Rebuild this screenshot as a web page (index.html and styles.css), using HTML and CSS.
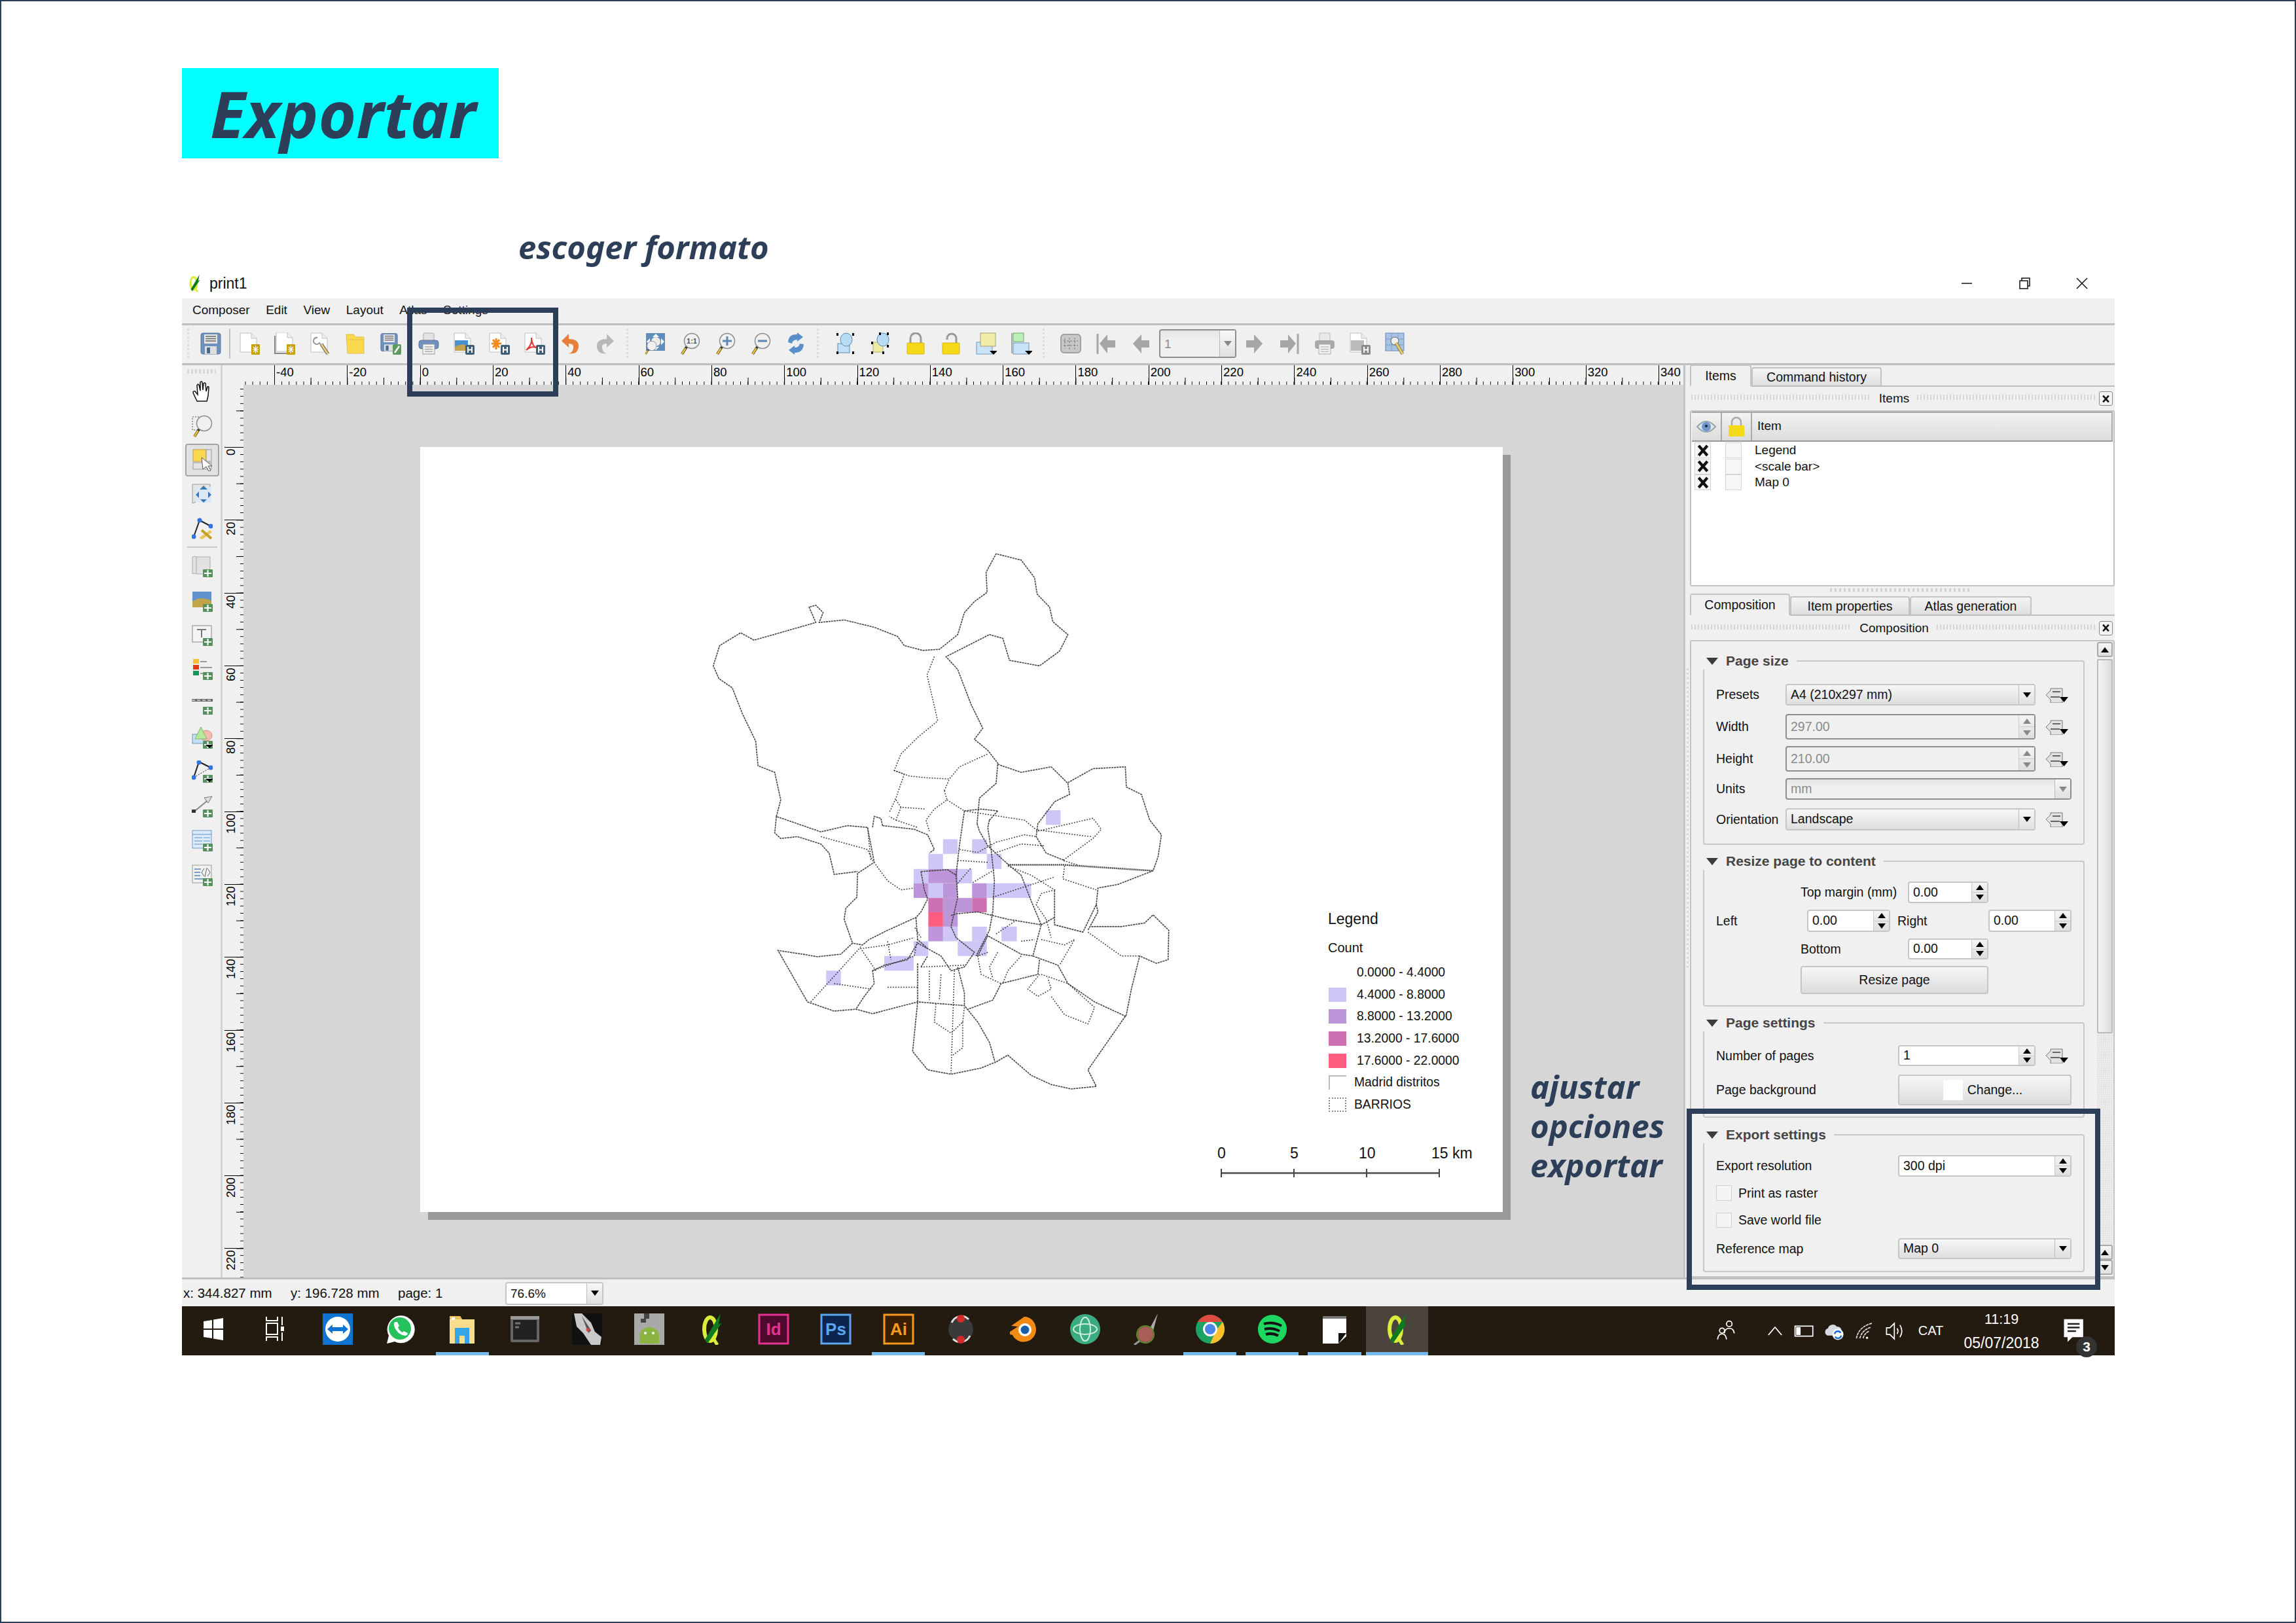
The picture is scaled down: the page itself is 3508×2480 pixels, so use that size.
FILE: index.html
```html
<!DOCTYPE html>
<html lang="es">
<head>
<meta charset="utf-8">
<title>Exportar</title>
<link rel="stylesheet" href="styles.css">
</head>
<body>
<svg class="defs" xmlns="http://www.w3.org/2000/svg">
<symbol id="pg" viewBox="0 0 32 34"><path d="M2 1h17l8 8v21H2z" fill="#fff" stroke="#bdbdbd"/><path d="M19 1v8h8" fill="#eee" stroke="#bdbdbd"/></symbol>
<symbol id="bdg" viewBox="0 0 32 34"><rect x="18" y="19" width="14" height="15" rx="2" fill="#3f5f78"/><path d="M22 22v9M28 22v9M22 26.500h6" stroke="#fff" stroke-width="2"/></symbol>
<symbol id="gold" viewBox="0 0 32 34"><rect x="19" y="18" width="13" height="16" rx="1" fill="#c7a00a"/><path d="M25.500 20v12M21 26h9M22 22l7 8M29 22l-7 8" stroke="#fff" stroke-width="1.200"/></symbol>
<symbol id="mag" viewBox="0 0 32 34"><circle cx="19" cy="13" r="11.500" fill="#f0f0f0" stroke="#8c8c8c" stroke-width="1.500"/><path d="M11 22L4 33" stroke="#333" stroke-width="4"/><path d="M9.500 24L4 33" stroke="#edc531" stroke-width="2.500"/></symbol>
<symbol id="plus" viewBox="0 0 32 34"><rect x="17" y="22" width="15" height="12" rx="1" fill="#56905f"/><path d="M24.500 23v10M19 28h11" stroke="#fff" stroke-width="2.200"/></symbol>
<symbol id="i-save" viewBox="0 0 32 34"><rect x="1" y="1" width="30" height="32" rx="3" fill="#6f91bd" stroke="#5a7699"/><rect x="6" y="3" width="20" height="14" fill="#e6e6e6"/><path d="M8 6h16M8 9.500h16M8 13h16" stroke="#666" stroke-width="1.500"/><rect x="7" y="21" width="18" height="12" fill="#dedede"/><rect x="10" y="23" width="5" height="9" fill="#4a6a90"/></symbol>
<symbol id="i-new" viewBox="0 0 32 34"><use href="#pg"/><use href="#gold"/></symbol>
<symbol id="i-dup" viewBox="0 0 32 34"><path d="M1 5v27h22" fill="none" stroke="#888" stroke-width="2"/><use href="#pg" x="1" y="-1"/><use href="#gold"/></symbol>
<symbol id="i-mgr" viewBox="0 0 32 34"><use href="#pg"/><path d="M12 8a5 5 0 1 0 3 8l5 6" fill="none" stroke="#999" stroke-width="2"/><path d="M18 18l10 15" stroke="#666" stroke-width="5"/><path d="M18 18l10 15" stroke="#e6cd7a" stroke-width="3"/></symbol>
<symbol id="i-open" viewBox="0 0 32 34"><path d="M2 3h11l3 4h13v25H4z" fill="#fbd94e" stroke="#e0bf4b"/><path d="M5 11h24" stroke="#e0bf4b"/></symbol>
<symbol id="i-saveas" viewBox="0 0 32 34"><use href="#i-save" width="27" height="30"/><rect x="19" y="18" width="13" height="16" rx="2" fill="#5f9a62"/><path d="M22 31l7-10" stroke="#fff" stroke-width="2.500"/></symbol>
<symbol id="i-print" viewBox="0 0 32 34"><rect x="8" y="1" width="16" height="14" rx="1" fill="#e3e3e3" stroke="#aaa"/><rect x="1" y="12" width="30" height="13" rx="4" fill="#6f91bd" stroke="#5a7699"/><rect x="7" y="18" width="18" height="15" fill="#f2f2f2" stroke="#999"/><path d="M10 22h12M10 25.500h12M10 29h12" stroke="#888"/></symbol>
<symbol id="i-eimg" viewBox="0 0 32 34"><use href="#pg" x="-1"/><rect x="2" y="12" width="20" height="16" fill="#4c90d4"/><path d="M2 22q9-6 20-2v8H2z" fill="#c2a54b"/><use href="#bdg"/></symbol>
<symbol id="i-esvg" viewBox="0 0 32 34"><use href="#pg" x="-1"/><path d="M11 9v17M4 17h15M6 11l10 12M16 11L6 23" stroke="#f08c1c" stroke-width="3"/><use href="#bdg"/></symbol>
<symbol id="i-epdf" viewBox="0 0 32 34"><use href="#pg" x="-1"/><path d="M11 8q2 10-8 19q9-8 18-3q-9-1-10-16" fill="none" stroke="#e53935" stroke-width="2.200"/><use href="#bdg"/></symbol>
<symbol id="i-undo" viewBox="0 0 32 34"><path d="M14 2L3 13l11 10v-6q8 0 7 7t-7 8q14 2 15-10t-15-12z" fill="#e67f3a"/></symbol>
<symbol id="i-redo" viewBox="0 0 32 34"><path d="M18 2l11 11-11 10v-6q-8 0-7 7t7 8q-14 2-15-10t15-12z" fill="#b8b8b8"/></symbol>
<symbol id="i-full" viewBox="0 0 32 34"><rect x="3" y="1" width="29" height="27" fill="#5f8dbe"/><path d="M18 2l5 5h-10zM18 27l5-5h-10zM4 14l5-5v10zM31 14l-5-5v10z" fill="#fff"/><circle cx="18" cy="14" r="7" fill="#eee"/><use href="#mag" width="20" height="22" y="12"/></symbol>
<symbol id="i-zin" viewBox="0 0 32 34"><use href="#mag"/><path d="M19 6v14M12 13h14" stroke="#5b87b8" stroke-width="3"/></symbol>
<symbol id="i-zout" viewBox="0 0 32 34"><use href="#mag"/><path d="M12 13h14" stroke="#5b87b8" stroke-width="3"/></symbol>
<symbol id="i-ref" viewBox="0 0 32 34"><path d="M4 15Q5 2 18 3V0l9 7-9 7v-3q-7 0-8 6zM28 18q-1 13-14 13v3l-9-7 9-7v3q7 0 8-6z" fill="#5a90c9"/></symbol>
<symbol id="i-grp" viewBox="0 0 32 34"><rect x="5" y="17" width="18" height="14" fill="#bfe0f5" stroke="#5c8ab0"/><ellipse cx="18" cy="11" rx="9" ry="10" fill="#b7dcf4" stroke="#5c8ab0"/><path d="M3 1h3v4H3zM27 1h3v4h-3zM3 29h3v4H3zM27 29h3v4h-3z"/></symbol>
<symbol id="i-ugrp" viewBox="0 0 32 34"><rect x="5" y="15" width="15" height="15" fill="#eeeaa6" stroke="#b5b070"/><ellipse cx="20" cy="11" rx="9" ry="10" fill="#b7dcf4" stroke="#5c8ab0"/><path d="M14 0h3v4h-3zM26 0h3v4h-3zM2 14h3v4H2zM26 19h3v4h-3zM2 29h3v4H2zM19 29h3v4h-3z"/></symbol>
<symbol id="i-lock" viewBox="0 0 32 34"><path d="M8 17V9a8 8 0 0 1 16 0v8" fill="none" stroke="#999" stroke-width="3"/><rect x="3" y="16" width="26" height="17" rx="1" fill="#f4d919" stroke="#d6b70c"/></symbol>
<symbol id="i-unlock" viewBox="0 0 32 34"><path d="M24 17V9a7 7 0 0 0-14 0v2" fill="none" stroke="#999" stroke-width="3"/><rect x="3" y="16" width="26" height="17" rx="1" fill="#f4d919" stroke="#d6b70c"/></symbol>
<symbol id="i-raise" viewBox="0 0 32 34"><rect x="1" y="15" width="24" height="18" fill="#c8e2f7" stroke="#6c96b8"/><rect x="7" y="1" width="23" height="20" fill="#f2eeaa" stroke="#a39f72"/><path d="M21 28h12l-6 6z"/></symbol>
<symbol id="i-align" viewBox="0 0 32 34"><path d="M1 1v31" stroke="#666"/><rect x="3" y="1" width="16" height="13" fill="#bdf0b8" stroke="#6aa76a"/><rect x="3" y="16" width="24" height="17" fill="#c8e2f7" stroke="#6c96b8"/><path d="M21 28h12l-6 6z"/></symbol>
<symbol id="i-atlas" viewBox="0 0 32 34"><rect x="1" y="3" width="30" height="28" rx="5" fill="#c8c8c8" stroke="#a0a0a0" stroke-width="2"/><path d="M7 9v16M14 8v18M22 8v18M5 13h22M5 20h22" stroke="#777" stroke-dasharray="3 2"/></symbol>
<symbol id="i-first" viewBox="0 0 32 34"><path d="M3 2v31" stroke="#a6a6a6" stroke-width="3"/><path d="M6 17L18 3v9h12v11H18v9z" fill="#a6a6a6"/></symbol>
<symbol id="i-prev" viewBox="0 0 32 34"><path d="M3 17L16 3v9h12v11H16v9z" fill="#a6a6a6"/></symbol>
<symbol id="i-next" viewBox="0 0 32 34"><path d="M29 17L16 3v9H4v11h12v9z" fill="#a6a6a6"/></symbol>
<symbol id="i-last" viewBox="0 0 32 34"><path d="M29 2v31" stroke="#a6a6a6" stroke-width="3"/><path d="M26 17L14 3v9H2v11h12v9z" fill="#a6a6a6"/></symbol>
<symbol id="i-gprint" viewBox="0 0 32 34"><rect x="8" y="1" width="16" height="14" rx="1" fill="#e8e8e8" stroke="#bbb"/><rect x="1" y="12" width="30" height="13" rx="4" fill="#a8a8a8"/><rect x="7" y="18" width="18" height="15" fill="#f2f2f2" stroke="#aaa"/><path d="M10 22h12M10 25.500h12M10 29h12" stroke="#aaa"/></symbol>
<symbol id="i-gexp" viewBox="0 0 32 34"><use href="#pg" x="-1"/><rect x="2" y="12" width="20" height="16" fill="#bbb"/><rect x="18" y="19" width="14" height="15" rx="2" fill="#8a8a8a"/><path d="M22 22v9M28 22v9M22 26.500h6" stroke="#fff" stroke-width="2"/></symbol>
<symbol id="i-aset" viewBox="0 0 32 34"><rect x="1" y="1" width="28" height="27" fill="#a9c3e2" stroke="#6488b6"/><path d="M10 2v25M20 2v25M2 10h26M2 19h26" stroke="#7b9bc4"/><circle cx="15" cy="13" r="6" fill="#eee" stroke="#666"/><path d="M17 16l10 17" stroke="#8b7b3c" stroke-width="5"/><path d="M17 16l10 17" stroke="#e8cf72" stroke-width="3"/></symbol>
<symbol id="l-hand" viewBox="0 0 32 34"><path d="M8 32L2 19q0-3 3-2l4 5-1-14q1-3 3-1l2 9 0-13q2-2 3 0l1 12 1-10q2-2 3 0l1 12 2-7q2-1 2 1l-1 13-2 8z" fill="#fff" stroke="#111" stroke-width="1.500"/></symbol>
<symbol id="l-zoom" viewBox="0 0 32 34"><rect x="1" y="3" width="16" height="20" fill="none" stroke="#555" stroke-dasharray="2 2"/><use href="#mag"/></symbol>
<symbol id="l-sel" viewBox="0 0 32 34"><rect x="2" y="1" width="20" height="18" fill="#fbd94e" stroke="#b9a14a"/><rect x="22" y="1" width="8" height="18" fill="#e4e4e4" stroke="#999"/><rect x="2" y="21" width="28" height="10" fill="#e4e4e4" stroke="#999"/><path d="M15 13l16 13-6 0 4 7-3 1-4-7-5 4z" fill="#fff" stroke="#555"/></symbol>
<symbol id="l-move" viewBox="0 0 32 34"><path d="M1 2h27v27H6l-5 2z" fill="#e4e4e4" stroke="#999"/><rect x="6" y="6" width="24" height="24" fill="#dce8f5"/><path d="M18 4l6 6H12zM18 30l-5-5h10zM6 18l5-5v10zM30 18l-5-5v10z" fill="#3f79b3"/></symbol>
<symbol id="l-node" viewBox="0 0 32 34"><path d="M3 29L12 4l17 9" fill="none" stroke="#222" stroke-width="2"/><circle cx="12" cy="4" r="3.500" fill="#2f73e0"/><circle cx="29" cy="13" r="3.500" fill="#2f73e0"/><circle cx="3" cy="29" r="3.500" fill="#2f73e0"/><path d="M11 31l17-12 3 3-15 11z" fill="#eac451"/><path d="M15 19l15 13" stroke="#c59f2d" stroke-width="4"/></symbol>
<symbol id="l-map" viewBox="0 0 32 34"><path d="M1 3q3-2 6 0h21v26H7q-3-2-6 0z" fill="#e2e2e2" stroke="#aaa"/><path d="M7 3v26" stroke="#aaa"/><use href="#plus"/></symbol>
<symbol id="l-pic" viewBox="0 0 32 34"><rect x="1" y="3" width="29" height="24" fill="#5f93cd"/><path d="M1 18q13-9 29-1v10H1z" fill="#c2a54b"/><use href="#plus"/></symbol>
<symbol id="l-lbl" viewBox="0 0 32 34"><rect x="1" y="3" width="29" height="25" fill="#f4f4f4" stroke="#888"/><path d="M8 9h14M15 9v12" stroke="#777" stroke-width="2"/><use href="#plus"/></symbol>
<symbol id="l-leg" viewBox="0 0 32 34"><rect x="2" y="2" width="9" height="7" fill="#fbc02d"/><rect x="2" y="11" width="9" height="7" fill="#e63a12"/><rect x="2" y="20" width="9" height="7" fill="#14955a"/><path d="M13 6h10M13 15h18M13 24h7" stroke="#999" stroke-width="2"/><use href="#plus"/></symbol>
<symbol id="l-scale" viewBox="0 0 32 34"><path d="M0 12h32" stroke="#666" stroke-width="4"/><path d="M0 12h32" stroke="#ddd" stroke-width="1.500" stroke-dasharray="5 3"/><use href="#plus"/></symbol>
<symbol id="l-shape" viewBox="0 0 32 34"><rect x="1" y="12" width="24" height="14" fill="#c5e0f5" stroke="#6c96b8"/><ellipse cx="22" cy="14" rx="9" ry="8" fill="#f6b9b0" stroke="#c98"/><path d="M14 1l9 18H5z" fill="#b7eb9a" stroke="#7db368"/><use href="#plus"/><path d="M21 28h12l-6 5z"/></symbol>
<symbol id="l-poly" viewBox="0 0 32 34"><path d="M3 26L11 2l18 9" fill="none" stroke="#222" stroke-width="2"/><path d="M3 26l26-15" stroke="#222" stroke-dasharray="2 2"/><circle cx="11" cy="3" r="3.500" fill="#2f73e0"/><circle cx="29" cy="11" r="3.500" fill="#2f73e0"/><circle cx="3" cy="26" r="3.500" fill="#2f73e0"/><use href="#plus"/><path d="M21 28h12l-6 5z"/></symbol>
<symbol id="l-arrow" viewBox="0 0 32 34"><path d="M5 24L28 5" stroke="#888" stroke-width="2"/><path d="M31 2l-12 2 6 8z" fill="#ddd" stroke="#777"/><rect x="0" y="22" width="6" height="5" fill="#333"/><use href="#plus"/></symbol>
<symbol id="l-table" viewBox="0 0 32 34"><rect x="1" y="2" width="29" height="27" fill="#dcecfa" stroke="#6f9bc6"/><path d="M1 8h29M4 13h12M18 13h10M4 18h12M18 18h10M4 23h12M18 23h10" stroke="#5f8fc1"/><use href="#plus"/></symbol>
<symbol id="l-html" viewBox="0 0 32 34"><rect x="1" y="2" width="29" height="27" fill="#f1f1f1" stroke="#999"/><path d="M4 8h10M4 13h9M4 18h9M4 23h14" stroke="#7aa0ca" stroke-width="2"/><path d="M19 7l-4 6 4 6M24 7l4 6-4 6M23 6l-3 14" stroke="#666" fill="none"/><use href="#plus"/></symbol>
<symbol id="dd" viewBox="0 0 34 24"><path d="M0 12l7-7V2h18v22H7v-5z" fill="#e2e2e2" stroke="#777"/><path d="M10 7h12M7 15h14" stroke="#666" stroke-width="2"/><path d="M21 15h13l-6.500 8z" fill="#000"/></symbol>
<symbol id="q" viewBox="0 0 48 48"><ellipse cx="22" cy="24" rx="9" ry="18" fill="none" stroke="#dcec3a" stroke-width="6"/><path d="M25 35l8 13" stroke="#dcec3a" stroke-width="5"/><path d="M14 40L38 0l-3 17 5-3-22 32z" fill="#0f7a1f"/></symbol>
<symbol id="t-win" viewBox="0 0 48 48"><path d="M9 12l13-2v13H9zM24 9.600L39 7v16H24zM9 25h13v13l-13-2zM24 25h15v16l-15-2.500z" fill="#fff"/></symbol>
<symbol id="t-view" viewBox="0 0 48 48"><path d="M10 5v6h17V5M10 42v-6h17v6M34 5v13M34 29v13" fill="none" stroke="#fff" stroke-width="2"/><rect x="10" y="15" width="17" height="17" fill="none" stroke="#fff" stroke-width="2"/><rect x="32" y="20" width="5" height="7" fill="#fff"/></symbol>
<symbol id="t-tv" viewBox="0 0 48 48"><rect x="1" y="0" width="46" height="48" fill="#0d74d2"/><circle cx="24" cy="24" r="19" fill="#fff"/><path d="M8 24l8-7v4h16v-4l8 7-8 7v-4H16v4z" fill="#0d74d2"/></symbol>
<symbol id="t-wa" viewBox="0 0 48 48"><path d="M4 46l3-12A21 21 0 1 1 16 43z" fill="#fff"/><circle cx="24" cy="23" r="17" fill="#25c15a"/><path d="M16 13q-3 4 2 12t14 9q4-1 4-4l-6-3-2 2q-5-2-7-8l2-2-3-6z" fill="#fff"/></symbol>
<symbol id="t-exp" viewBox="0 0 48 48"><path d="M5 4h16l3 5h19v37H5z" fill="#f9dc8d"/><path d="M5 4h16l3 5H5z" fill="#edc35e"/><rect x="13" y="22" width="22" height="24" fill="#35a5e6"/><rect x="20" y="34" width="8" height="12" fill="#f9dc8d"/><rect x="8" y="6" width="5" height="4" fill="#fff"/></symbol>
<symbol id="t-term" viewBox="0 0 48 48"><rect x="2" y="4" width="44" height="40" rx="2" fill="#666"/><rect x="6" y="10" width="36" height="30" fill="#222"/><rect x="2" y="4" width="44" height="5" fill="#999"/><path d="M9 15h8M9 21h6" stroke="#777" stroke-width="3"/></symbol>
<symbol id="t-anime" viewBox="0 0 48 48"><rect x="1" y="0" width="46" height="48" fill="#111"/><path d="M4 0h12l14 14 6 14 10 8-2 12H30L18 30 8 20z" fill="#c9c9c9"/><path d="M16 4l14 22-4 4z" fill="#555"/><circle cx="25" cy="25" r="2.500" fill="#d44"/></symbol>
<symbol id="t-andr" viewBox="0 0 48 48"><rect x="1" y="0" width="46" height="48" fill="#a9a9a9"/><path d="M16 0h8v8h-5v6h-8V8h5z" fill="#444"/><path d="M9 34a15 13 0 0 1 30 0v12H9z" fill="#8cb442"/><circle cx="18" cy="30" r="2" fill="#fff"/><circle cx="30" cy="30" r="2" fill="#fff"/></symbol>
<symbol id="t-rec" viewBox="0 0 48 48"><circle cx="24" cy="24" r="19" fill="#3a3a3a"/><path d="M10 14a16 16 0 0 1 26-5M38 34a16 16 0 0 1-26 5" fill="none" stroke="#ddd" stroke-width="3"/><circle cx="24" cy="8" r="6" fill="#d62a2a"/><circle cx="24" cy="40" r="6" fill="#d62a2a"/></symbol>
<symbol id="t-blend" viewBox="0 0 48 48"><path d="M4 28l12-8-10-1 20-14c10 0 18 8 18 20A19 19 0 0 1 8 33l-4-1z" fill="#f08a12"/><circle cx="27" cy="25" r="10" fill="#fff"/><circle cx="27" cy="25" r="6.500" fill="#1b5ea8"/></symbol>
<symbol id="t-atom" viewBox="0 0 48 48"><circle cx="24" cy="24" r="23" fill="#3bab81"/><ellipse cx="24" cy="24" rx="8" ry="18" fill="none" stroke="#cfeedd" stroke-width="2"/><ellipse cx="24" cy="24" rx="18" ry="8" fill="none" stroke="#cfeedd" stroke-width="2"/></symbol>
<symbol id="t-brush" viewBox="0 0 48 48"><path d="M40 0L26 26l6 4z" fill="#aaa"/><circle cx="21" cy="32" r="12" fill="#a85f58"/><circle cx="21" cy="32" r="13" fill="none" stroke="#5c8a2c" stroke-width="2"/><path d="M12 42l-8 6" stroke="#999" stroke-width="3"/></symbol>
<symbol id="t-chrome" viewBox="0 0 48 48"><circle cx="24" cy="24" r="22" fill="#1da462"/><path d="M5 13a22 22 0 0 1 38 0H24z" fill="#dd4c3e"/><path d="M43 13a22 22 0 0 1-19 33l9-20z" fill="#fbc02d"/><circle cx="24" cy="24" r="11" fill="#fff"/><circle cx="24" cy="24" r="8" fill="#4a86e8"/></symbol>
<symbol id="t-spot" viewBox="0 0 48 48"><circle cx="24" cy="24" r="22" fill="#1ed760"/><path d="M11 16q14-4 27 3M12 24q12-3 23 3M14 32q10-3 19 2" fill="none" stroke="#111" stroke-width="4"/></symbol>
<symbol id="t-sticky" viewBox="0 0 48 48"><rect x="6" y="4" width="36" height="4" fill="#777"/><path d="M6 8h36v27L30 46H6z" fill="#fff"/><path d="M42 30L30 46V30z" fill="#111"/></symbol>
<symbol id="u-people" viewBox="0 0 40 40"><circle cx="26" cy="7" r="5" fill="none" stroke="#fff" stroke-width="2"/><path d="M17 24q1-9 9-9t9 9" fill="none" stroke="#fff" stroke-width="2"/><circle cx="13" cy="19" r="4.500" fill="#231a10" stroke="#fff" stroke-width="2"/><path d="M5 35q1-10 8-10t8 10" fill="none" stroke="#fff" stroke-width="2"/></symbol>
<symbol id="u-chev" viewBox="0 0 40 40"><path d="M8 27l12-14 12 14" fill="none" stroke="#fff" stroke-width="2"/></symbol>
<symbol id="u-batt" viewBox="0 0 40 40"><rect x="3" y="11" width="32" height="18" fill="none" stroke="#fff" stroke-width="2"/><rect x="5" y="13" width="8" height="14" fill="#fff"/></symbol>
<symbol id="u-cloud" viewBox="0 0 40 40"><path d="M7 28a7 7 0 0 1 1-13a9 9 0 0 1 16-3a7 7 0 0 1 8 9v7z" fill="#d6dbe2"/><circle cx="26" cy="26" r="10" fill="#fff"/><path d="M20 25a6 6 0 0 1 11-2M32 28a6 6 0 0 1-11 2" fill="none" stroke="#1f6fd6" stroke-width="3"/></symbol>
<symbol id="u-wifi" viewBox="0 0 40 40"><path d="M4 33Q8 12 32 6M10 33Q14 18 30 13M16 33q2-9 11-13" fill="none" stroke="#dcdcdc" stroke-width="2" stroke-dasharray="5 1"/><circle cx="23" cy="32" r="2" fill="#fff"/></symbol>
<symbol id="u-spk" viewBox="0 0 40 40"><path d="M4 14h6l8-8v28l-8-8H4z" fill="none" stroke="#fff" stroke-width="2"/><path d="M23 15q3 5 0 10M28 9q7 11 0 22" fill="none" stroke="#fff" stroke-width="2"/></symbol>
<symbol id="u-notif" viewBox="0 0 48 48"><path d="M6 4h32v30H20l-8 8v-8H6z" fill="#fff"/><path d="M12 12h20M12 18h20M12 24h14" stroke="#222" stroke-width="2.500"/></symbol>
<symbol id="w-min" viewBox="0 0 24 24"><path d="M4 12h16" stroke="#111" stroke-width="1.500"/></symbol>
<symbol id="w-res" viewBox="0 0 24 24"><rect x="5" y="8" width="12" height="12" fill="none" stroke="#111" stroke-width="1.500"/><path d="M8 8V4h12v12h-3" fill="none" stroke="#111" stroke-width="1.500"/></symbol>
<symbol id="w-cls" viewBox="0 0 24 24"><path d="M4 4l16 16M20 4L4 20" stroke="#111" stroke-width="1.500"/></symbol>
<symbol id="x-chk" viewBox="0 0 24 24"><path d="M4 3l16 18M20 3L4 21" stroke="#111" stroke-width="5"/></symbol>
<symbol id="x-eye" viewBox="0 0 30 24"><path d="M1 12Q15-4 29 12Q15 28 1 12z" fill="#dfe6ee" stroke="#9aa4ad" stroke-width="2"/><circle cx="15" cy="12" r="7" fill="#6d97c7"/><circle cx="15" cy="11" r="2" fill="#223"/></symbol>
<symbol id="x-lock" viewBox="0 0 26 32"><path d="M6 16V9a7 7 0 0 1 14 0v7" fill="none" stroke="#aaa" stroke-width="2.500"/><rect x="1" y="14" width="24" height="17" rx="1" fill="#f4d919"/></symbol>
</svg>

<main class="slide">
  <h1 class="title">Exportar</h1>
  <p class="note note-top">escoger formato</p>

  <div class="win">
    <header class="titlebar">
      <svg class="qicon"><use href="#q"/></svg>
      <span class="wintitle">print1</span>
      <span class="winbtns">
        <svg class="wb"><use href="#w-min"/></svg>
        <svg class="wb"><use href="#w-res"/></svg>
        <svg class="wb"><use href="#w-cls"/></svg>
      </span>
    </header>

    <nav class="menubar">
      <span>Composer</span><span>Edit</span><span>View</span><span>Layout</span><span>Atlas</span><span>Settings</span>
    </nav>

    <div class="toolbar">
      <span class="handle"></span>
      <span class="tb"><svg class="ic"><use href="#i-save"/></svg></span>
      <span class="tsep"></span>
      <span class="tb"><svg class="ic"><use href="#i-new"/></svg></span>
      <span class="tb"><svg class="ic"><use href="#i-dup"/></svg></span>
      <span class="tb"><svg class="ic"><use href="#i-mgr"/></svg></span>
      <span class="tb"><svg class="ic"><use href="#i-open"/></svg></span>
      <span class="tb"><svg class="ic"><use href="#i-saveas"/></svg></span>
      <span class="tgap4"></span>
      <span class="tb"><svg class="ic"><use href="#i-print"/></svg></span>
      <span class="tb"><svg class="ic"><use href="#i-eimg"/></svg></span>
      <span class="tb"><svg class="ic"><use href="#i-esvg"/></svg></span>
      <span class="tb"><svg class="ic"><use href="#i-epdf"/></svg></span>
      <span class="tb"><svg class="ic"><use href="#i-undo"/></svg></span>
      <span class="tb"><svg class="ic"><use href="#i-redo"/></svg></span>
      <span class="handle handle-mid"></span>
      <span class="tb"><svg class="ic"><use href="#i-full"/></svg></span>
      <span class="tb"><svg class="ic" viewBox="0 0 32 34"><use href="#mag"/><text x="19" y="17" text-anchor="middle" class="svt">1:1</text></svg></span>
      <span class="tb"><svg class="ic"><use href="#i-zin"/></svg></span>
      <span class="tb"><svg class="ic"><use href="#i-zout"/></svg></span>
      <span class="tb"><svg class="ic"><use href="#i-ref"/></svg></span>
      <span class="handle handle-mid"></span>
      <span class="tb"><svg class="ic"><use href="#i-grp"/></svg></span>
      <span class="tb"><svg class="ic"><use href="#i-ugrp"/></svg></span>
      <span class="tb"><svg class="ic"><use href="#i-lock"/></svg></span>
      <span class="tb"><svg class="ic"><use href="#i-unlock"/></svg></span>
      <span class="tb"><svg class="ic"><use href="#i-raise"/></svg></span>
      <span class="tb"><svg class="ic"><use href="#i-align"/></svg></span>
      <span class="handle handle-mid"></span>
      <span class="tb"><svg class="ic"><use href="#i-atlas"/></svg></span>
      <span class="tb"><svg class="ic"><use href="#i-first"/></svg></span>
      <span class="tb"><svg class="ic"><use href="#i-prev"/></svg></span>
      <span class="fld dis combo pagebox"><span class="t">1</span><span class="arr"><i class="dn"></i></span></span>
      <span class="tb"><svg class="ic"><use href="#i-next"/></svg></span>
      <span class="tb"><svg class="ic"><use href="#i-last"/></svg></span>
      <span class="tb"><svg class="ic"><use href="#i-gprint"/></svg></span>
      <span class="tb"><svg class="ic"><use href="#i-gexp"/></svg></span>
      <span class="tb"><svg class="ic"><use href="#i-aset"/></svg></span>
    </div>

    <div class="work">
      <aside class="lefttools">
        <div class="lgrip"></div>
        <span class="lt"><svg class="ic"><use href="#l-hand"/></svg></span>
        <span class="lt"><svg class="ic"><use href="#l-zoom"/></svg></span>
        <span class="lt lt-on"><svg class="ic"><use href="#l-sel"/></svg></span>
        <span class="lt"><svg class="ic"><use href="#l-move"/></svg></span>
        <span class="lt"><svg class="ic"><use href="#l-node"/></svg></span>
        <span class="lsep"></span>
        <span class="lt"><svg class="ic"><use href="#l-map"/></svg></span>
        <span class="lt"><svg class="ic"><use href="#l-pic"/></svg></span>
        <span class="lt"><svg class="ic"><use href="#l-lbl"/></svg></span>
        <span class="lt"><svg class="ic"><use href="#l-leg"/></svg></span>
        <span class="lt"><svg class="ic"><use href="#l-scale"/></svg></span>
        <span class="lt"><svg class="ic"><use href="#l-shape"/></svg></span>
        <span class="lt"><svg class="ic"><use href="#l-poly"/></svg></span>
        <span class="lt"><svg class="ic"><use href="#l-arrow"/></svg></span>
        <span class="lt"><svg class="ic"><use href="#l-table"/></svg></span>
        <span class="lt"><svg class="ic"><use href="#l-html"/></svg></span>
      </aside>

      <section class="center">
        <div class="hruler">
          <span>-40</span><span>-20</span><span>0</span><span>20</span><span>40</span><span>60</span><span>80</span><span>100</span><span>120</span><span>140</span><span>160</span><span>180</span><span>200</span><span>220</span><span>240</span><span>260</span><span>280</span><span>300</span><span>320</span><span>340</span>
        </div>
        <div class="below">
          <div class="vruler">
            <span><b>0</b></span><span><b>20</b></span><span><b>40</b></span><span><b>60</b></span><span><b>80</b></span><span><b>100</b></span><span><b>120</b></span><span><b>140</b></span><span><b>160</b></span><span><b>180</b></span><span><b>200</b></span><span><b>220</b></span>
          </div>
          <div class="canvas">
            <div class="page">
              <svg class="map" viewBox="0 0 1568 1568" preserveAspectRatio="none">
                <g class="c1">
                  <rect x="1074" y="743" width="44" height="40"/><rect x="766" y="822" width="44" height="40"/><rect x="853" y="822" width="44" height="40"/><rect x="722" y="862" width="44" height="41"/><rect x="897" y="862" width="44" height="41"/><rect x="678" y="903" width="44" height="39"/><rect x="810" y="903" width="43" height="39"/><rect x="722" y="942" width="44" height="40"/><rect x="897" y="942" width="133" height="40"/><rect x="853" y="1060" width="44" height="40"/><rect x="941" y="1060" width="46" height="40"/><rect x="766" y="1060" width="44" height="40"/><rect x="678" y="1100" width="44" height="40"/><rect x="810" y="1100" width="87" height="40"/><rect x="590" y="1140" width="88" height="40"/><rect x="416" y="1180" width="44" height="40"/>
                </g>
                <g class="c2">
                  <rect x="722" y="903" width="88" height="39"/><rect x="678" y="942" width="44" height="40"/><rect x="766" y="942" width="44" height="40"/><rect x="853" y="942" width="44" height="40"/><rect x="766" y="982" width="87" height="39"/><rect x="766" y="1021" width="44" height="39"/><rect x="722" y="1060" width="44" height="40"/>
                </g>
                <g class="c3"><rect x="722" y="982" width="44" height="39"/><rect x="853" y="982" width="44" height="39"/></g>
                <g class="c4"><rect x="722" y="1021" width="44" height="39"/></g>
                <g class="barrio">
                  <path d="M740 325L718 375L735 440L750 500L690 545L640 590L620 635L665 650L720 655L785 658L815 625L900 590"/>
                  <path d="M620 635L650 645L625 710L605 750M770 690L785 658M770 690L778 715L740 740L715 770L725 800M778 715L830 745M625 715L640 735L715 740M640 735L625 770L605 760M625 770L690 790"/>
                  <path d="M830 745L1010 770L1050 800L1215 765L1240 795L1215 820L1125 880L1180 895M1050 797L1120 805L1210 815M925 830L1010 810L1045 815M920 860L1000 835L1070 840"/>
                  <path d="M960 895L1030 920L1100 960L1060 970L1045 1000L1075 1040M1130 895L1125 930L1225 960M400 815L540 850L555 880L600 935L640 960L680 955M540 790L550 880M815 850L870 858L925 830M810 880L900 885M810 942L850 900M855 940L920 905M915 980L1100 925M1000 1100L1040 1095M925 1080L990 1040"/>
                  <path d="M565 1180L520 1120L600 1110L680 1090M370 1265L520 1115M440 1215L550 1230M555 1180L680 1140L690 1095M600 1100L610 1150M700 1090L680 1060"/>
                  <path d="M700 1170L830 1165M725 1180L725 1260M760 1190L755 1260M800 1180L790 1460M745 1270L740 1320L790 1350L825 1320L830 1280M825 1320L825 1390L795 1410M600 1225L690 1225"/>
                  <path d="M900 1130L870 1140L880 1190L940 1215M930 1130L905 1170L915 1200M1000 1140L960 1180L945 1215M1055 1190L1020 1230L1050 1250L1090 1230L1080 1200M1060 1190L1140 1215L1220 1280L1200 1325L1130 1300L1090 1250M1060 1095L1130 1110L1160 1095L1115 1165M1200 1075L1300 1140L1355 1140M1075 1040L1090 1090"/>
                </g>
                <g class="distrito">
                  <path d="M267 760L280 715L262 640L212 622L205 555L165 480L135 410L95 385L78 350L97 295L160 260L200 280L270 262L385 232L365 190L385 185L407 205L395 232L470 225L560 245L630 270L650 295L705 308L755 305L810 265L830 205L860 175L898 150L895 95L925 45L1000 62L1040 110L1048 155L1085 190L1095 230L1140 265L1115 310L1055 350L965 335L945 275L905 265L840 295L775 325L810 360L850 455L885 520L860 550L900 580L930 615L925 670L875 710L868 780"/>
                  <path d="M930 618L1000 640L1090 625L1140 670L1145 700L1100 720L1050 780L1045 815L1075 860L1130 880M1140 668L1215 630L1312 625L1315 680L1360 700L1385 770L1420 810L1410 870L1395 908L1290 945L1230 955L1225 1000L1185 1075L1100 1055L1100 960M1225 1000L1230 1020L1200 1070M1210 1060L1300 1060L1370 1050L1395 1028L1442 1070L1440 1150L1405 1160L1355 1140L1330 1230L1315 1300L1200 1450L1225 1495L1150 1502L1090 1490L1030 1465L960 1410L922 1430L905 1375L870 1320L830 1275L690 1265L555 1297L505 1285L440 1290L360 1265L272 1125L345 1135L390 1142L460 1135L495 1105L470 1040L475 1010L508 980L510 915L560 885L540 790L480 785L400 802L267 760L262 805L280 820L330 815L400 835L425 860L440 918L510 910"/>
                  <path d="M585 785L580 765L560 760L555 790M585 785L680 795L720 810L740 850L725 860M700 910L780 905L805 920L810 980L800 1020L790 1060L805 1090L860 1130L830 1170L790 1180L760 1140L720 1120L690 1105L660 1150L590 1165L555 1180L560 1215L530 1250L505 1285M700 910L710 960L720 985L700 1020L685 1035L600 1070L545 1095L525 1110L495 1105M685 1035L690 1095L720 1120M805 1025L870 1020L960 1040L1060 1055L1100 1035M790 1030L805 1025"/>
                  <path d="M830 745L815 840L805 920M830 745L880 740L930 745M905 770L900 790L910 850L920 935L915 1020L905 1070L865 1140M905 770L930 745M868 780L875 800L900 840L960 890L1000 920L1030 990L1060 1055L1035 1140M1035 1140L1000 1135L900 1085L870 1140M1035 1140L1110 1165L1140 1215L1220 1265L1315 1305M1055 1150L1050 1190L940 1215L915 1260L840 1285M690 1160L690 1265L675 1400L720 1450L790 1462L880 1445L920 1430M810 1170L830 1240L830 1275M700 1170L720 1140"/>
                  <path class="heavy" d="M960 892L1130 892L1395 908"/>
                </g>
              </svg>

              <div class="legend">
                <div class="lg-title">Legend</div>
                <div class="lg-count">Count</div>
                <div class="lg-row"><i class="sw"></i><span>0.0000 - 4.4000</span></div>
                <div class="lg-row"><i class="sw s1"></i><span>4.4000 - 8.8000</span></div>
                <div class="lg-row"><i class="sw s2"></i><span>8.8000 - 13.2000</span></div>
                <div class="lg-row"><i class="sw s3"></i><span>13.2000 - 17.6000</span></div>
                <div class="lg-row"><i class="sw s4"></i><span>17.6000 - 22.0000</span></div>
                <div class="lg-row lg-b"><i class="sw s5"></i><span>Madrid distritos</span></div>
                <div class="lg-row lg-b"><i class="sw s6"></i><span>BARRIOS</span></div>
              </div>

              <div class="scale">
                <div class="sc-labels"><span>0</span><span>5</span><span>10</span><span>15 km</span></div>
                <div class="sc-bar"><i></i><i></i><i></i><i></i></div>
              </div>
            </div>
          </div>
        </div>
      </section>

      <div class="vsplit"><i></i></div>

      <aside class="panel">
        <div class="tabs">
          <span class="tab on tab-a">Items</span><span class="tab tab-b">Command history</span>
        </div>
        <div class="dock"><i></i><span>Items</span><i></i><em class="close"><svg><use href="#x-chk"/></svg></em></div>
        <div class="tree">
          <div class="thead">
            <span class="th th1"><svg class="eye"><use href="#x-eye"/></svg></span>
            <span class="th th2"><svg class="lk"><use href="#x-lock"/></svg></span>
            <span class="th th3">Item</span>
          </div>
          <div class="trow"><span class="ck"><svg><use href="#x-chk"/></svg></span><span class="ck ck2"></span><span>Legend</span></div>
          <div class="trow"><span class="ck"><svg><use href="#x-chk"/></svg></span><span class="ck ck2"></span><span>&lt;scale bar&gt;</span></div>
          <div class="trow"><span class="ck"><svg><use href="#x-chk"/></svg></span><span class="ck ck2"></span><span>Map 0</span></div>
        </div>
        <div class="hsplit"><i></i></div>
        <div class="tabs tabs2">
          <span class="tab on tab-c">Composition</span><span class="tab tab-d">Item properties</span><span class="tab tab-e">Atlas generation</span>
        </div>
        <div class="dock dock2"><i></i><span>Composition</span><i></i><em class="close"><svg><use href="#x-chk"/></svg></em></div>

        <div class="scrollarea">
          <div class="scontent">
            <section class="group g1">
              <h3 class="gt"><i class="tri"></i>Page size</h3>
              <div class="row"><label class="lb">Presets</label><span class="fld combo f382 h33"><span class="t">A4 (210x297 mm)</span><span class="arr"><i class="dn"></i></span></span><svg class="dd"><use href="#dd"/></svg></div>
              <div class="row mt13"><label class="lb">Width</label><span class="fld dis f382 h39"><span class="t">297.00</span><span class="spn"><i class="up"></i><i class="dn"></i></span></span><svg class="dd"><use href="#dd"/></svg></div>
              <div class="row"><label class="lb">Height</label><span class="fld dis f382 h39"><span class="t">210.00</span><span class="spn"><i class="up"></i><i class="dn"></i></span></span><svg class="dd"><use href="#dd"/></svg></div>
              <div class="row"><label class="lb">Units</label><span class="fld dis combo f437 h33"><span class="t">mm</span><span class="arr"><i class="dn"></i></span></span></div>
              <div class="row mt13"><label class="lb">Orientation</label><span class="fld combo f382 h34"><span class="t">Landscape</span><span class="arr"><i class="dn"></i></span></span><svg class="dd"><use href="#dd"/></svg></div>
            </section>

            <section class="group g2">
              <h3 class="gt"><i class="tri"></i>Resize page to content</h3>
              <div class="row pl129"><label class="lb w164">Top margin (mm)</label><span class="fld f123 h33"><span class="t">0.00</span><span class="spn"><i class="up"></i><i class="dn"></i></span></span></div>
              <div class="row"><label class="lb w139">Left</label><span class="fld f127 h34"><span class="t">0.00</span><span class="spn"><i class="up"></i><i class="dn"></i></span></span><label class="lb w150 pl11">Right</label><span class="fld f127 h34"><span class="t">0.00</span><span class="spn"><i class="up"></i><i class="dn"></i></span></span></div>
              <div class="row pl129"><label class="lb w164">Bottom</label><span class="fld f123 h32"><span class="t">0.00</span><span class="spn"><i class="up"></i><i class="dn"></i></span></span></div>
              <div class="row pl129"><span class="btn b287">Resize page</span></div>
            </section>

            <section class="group g3">
              <h3 class="gt"><i class="tri"></i>Page settings</h3>
              <div class="row"><label class="lb w278">Number of pages</label><span class="fld f210 h32"><span class="t">1</span><span class="spn"><i class="up"></i><i class="dn"></i></span></span><svg class="dd"><use href="#dd"/></svg></div>
              <div class="row mt13"><label class="lb w278">Page background</label><span class="btn b265"><i class="swatch"></i>Change...</span></div>
            </section>

            <section class="group g4">
              <h3 class="gt"><i class="tri"></i>Export settings</h3>
              <div class="row"><label class="lb w278">Export resolution</label><span class="fld f265 h33"><span class="t">300 dpi</span><span class="spn"><i class="up"></i><i class="dn"></i></span></span></div>
              <div class="row mt13 h24"><span class="box"></span><label>Print as raster</label></div>
              <div class="row mt18 h23"><span class="box"></span><label>Save world file</label></div>
              <div class="row mt16"><label class="lb w278">Reference map</label><span class="fld combo f265 h32"><span class="t">Map 0</span><span class="arr"><i class="dn"></i></span></span></div>
            </section>
          </div>
          <div class="sbar">
            <span class="sb-b"><i class="up"></i></span>
            <span class="sb-thumb"></span>
            <span class="sb-track"></span>
            <span class="sb-b"><i class="up"></i></span>
            <span class="sb-b"><i class="dn"></i></span>
          </div>
        </div>
      </aside>
    </div>

    <footer class="status">
      <span class="st st1">x: 344.827 mm</span><span class="st st2">y: 196.728 mm</span><span class="st st3">page: 1</span>
      <span class="fld combo zoomc"><span class="t">76.6%</span><span class="arr"><i class="dn"></i></span></span>
    </footer>

    <div class="taskbar">
      <span class="tk"><svg><use href="#t-win"/></svg></span>
      <span class="tk"><svg><use href="#t-view"/></svg></span>
      <span class="tk"><svg><use href="#t-tv"/></svg></span>
      <span class="tk"><svg><use href="#t-wa"/></svg></span>
      <span class="tk run"><svg><use href="#t-exp"/></svg></span>
      <span class="tk"><svg><use href="#t-term"/></svg></span>
      <span class="tk"><svg><use href="#t-anime"/></svg></span>
      <span class="tk"><svg><use href="#t-andr"/></svg></span>
      <span class="tk"><svg><use href="#q"/></svg></span>
      <span class="tk"><svg viewBox="0 0 48 48"><rect x="2" y="2" width="44" height="44" fill="#4d0a2c" stroke="#e5328f" stroke-width="3"/><text x="24" y="33" text-anchor="middle" class="svl pink">Id</text></svg></span>
      <span class="tk"><svg viewBox="0 0 48 48"><rect x="2" y="2" width="44" height="44" fill="#0c2550" stroke="#5ba6ec" stroke-width="3"/><text x="24" y="33" text-anchor="middle" class="svl blue">Ps</text></svg></span>
      <span class="tk run"><svg viewBox="0 0 48 48"><rect x="2" y="2" width="44" height="44" fill="#3a1e00" stroke="#f79a1e" stroke-width="3"/><text x="24" y="33" text-anchor="middle" class="svl orange">Ai</text></svg></span>
      <span class="tk"><svg><use href="#t-rec"/></svg></span>
      <span class="tk"><svg><use href="#t-blend"/></svg></span>
      <span class="tk"><svg><use href="#t-atom"/></svg></span>
      <span class="tk"><svg><use href="#t-brush"/></svg></span>
      <span class="tk run"><svg><use href="#t-chrome"/></svg></span>
      <span class="tk run"><svg><use href="#t-spot"/></svg></span>
      <span class="tk run"><svg><use href="#t-sticky"/></svg></span>
      <span class="tk run act"><svg><use href="#q"/></svg></span>
      <div class="tray">
        <span class="ty ty-p"><svg><use href="#u-people"/></svg></span>
        <span class="ty"><svg><use href="#u-chev"/></svg></span>
        <span class="ty"><svg><use href="#u-batt"/></svg></span>
        <span class="ty"><svg><use href="#u-cloud"/></svg></span>
        <span class="ty"><svg><use href="#u-wifi"/></svg></span>
        <span class="ty"><svg><use href="#u-spk"/></svg></span>
        <span class="ty">CAT</span>
        <span class="clock"><span>11:19</span><span class="date">05/07/2018</span></span>
        <span class="ty ty-n"><svg><use href="#u-notif"/></svg><b class="nbadge">3</b></span>
      </div>
    </div>
  </div>

  <p class="note note-side">ajustar<br>opciones<br>exportar</p>
  <div class="mark mark1"></div>
  <div class="mark mark2"></div>
</main>
</body>
</html>
```

FILE: styles.css
```css
* { box-sizing: border-box; }
html, body { margin: 0; padding: 0; background: #fff; }
body { font-family: "Liberation Sans", Arial, sans-serif; font-size: 19px; color: #111; }
.defs { position: absolute; width: 0; height: 0; overflow: hidden; }
.svt { font: 700 11px "Liberation Sans", sans-serif; fill: #555; }
.svl { font: 700 26px "Liberation Sans", sans-serif; }
.pink { fill: #e5328f; } .blue { fill: #5ba6ec; } .orange { fill: #f79a1e; }

.slide { position: relative; width: 3508px; height: 2480px; padding: 102px 0 0 276px; border: 2px solid #2c3e58; overflow: hidden; background: #fff; }
.title { width: 484px; height: 138px; margin: 0; padding-left: 43px; background: #00ffff; color: #2c3e58; font: italic 700 99px/138px "Noto Sans", sans-serif; }
.note { margin: 0; color: #2c3e58; font-family: "Noto Sans", sans-serif; font-style: italic; font-weight: 700; }
.note-top { margin: 105px 0 3px 514px; font-size: 49px; line-height: 60px; height: 60px; }
.note-side { position: absolute; left: 2336px; top: 1628px; font-size: 49px; line-height: 60px; }
.mark { position: absolute; border: 8px solid #2c3e58; }
.mark1 { left: 620px; top: 468px; width: 231px; height: 136px; }
.mark2 { left: 2575px; top: 1692px; width: 632px; height: 277px; }

/* window */
.win { width: 2953px; height: 1661px; display: flex; flex-direction: column; background: #f0f0f0; }
.titlebar { height: 46px; flex: none; background: #fff; display: flex; align-items: center; padding-left: 6px; }
.qicon { width: 26px; height: 30px; }
.wintitle { margin-left: 10px; font-size: 23px; }
.winbtns { margin-left: auto; display: flex; gap: 64px; padding-right: 38px; }
.wb { width: 24px; height: 24px; }
.menubar { height: 41px; flex: none; display: flex; gap: 24.5px; align-items: center; padding: 0 0 2px 16px; font-size: 19px; border-bottom: 3px solid #bfbfbf; }
.toolbar { height: 61px; flex: none; display: flex; align-items: center; padding-left: 8px; border-bottom: 3px solid #bfbfbf; padding-bottom: 2px; }
.handle { flex: none; width: 9px; height: 46px; background: linear-gradient(#dcdcdc 50%, transparent 50%) 0 0 / 3px 6px repeat-y; }
.handle-mid { width: 21px; background-position: 5px 0; }
.tsep { flex: none; width: 5px; height: 46px; background: linear-gradient(#c4c4c4, #c4c4c4) 1px 0 / 2px 100% no-repeat; }
.tgap4 { flex: none; width: 4px; }
.tb { flex: none; width: 54px; display: flex; justify-content: center; align-items: center; }
.ic { width: 32px; height: 34px; display: block; }
.pagebox { width: 118px; height: 44px; }
.pagebox .t { padding-left: 6px; }

.work { flex: 1; min-height: 0; display: flex; }
.lefttools { width: 62px; flex: none; display: flex; flex-direction: column; align-items: center; padding-top: 6px; position: relative; border-right: 3px solid #d4d4d4; }
.lgrip { width: 44px; height: 7px; margin-bottom: 1px; background: linear-gradient(to right, #d8d8d8 50%, transparent 50%) 0 0 / 6px 3px repeat; }
.lt { flex: none; height: 52.4px; width: 100%; display: flex; align-items: center; justify-content: center; margin-left: 3px; }
.lt-on { width: 52px; height: 50px; margin: 1.200px 0 1.200px 3px; background: #e2e2e2; border: 2px solid #a4a4a4; border-radius: 4px; }
.lsep { flex: none; width: 46px; height: 2px; margin: 1px 0 2px 3px; background: #c8c8c8; }

.center { width: 2232px; flex: none; display: flex; flex-direction: column; }
.hruler { height: 30px; flex: none; margin-left: 32px; padding-left: 47px; display: flex; overflow: hidden;
  background:
    linear-gradient(to right, #000 1px, transparent 1px) 47px 100% / 55.66px 11px repeat-x,
    linear-gradient(to right, #000 1px, transparent 1px) 47px 100% / 11.132px 5px repeat-x; }
.hruler span { flex: none; width: 111.32px; border-left: 1px solid #000; padding-left: 2px; line-height: 21px; font-size: 18.500px; color: #000; }
.below { flex: 1; min-height: 0; display: flex; }
.vruler { width: 32px; flex: none; padding-top: 95px; display: flex; flex-direction: column; overflow: hidden;
  background:
    linear-gradient(#000 1px, transparent 1px) 100% 95px / 11px 55.66px repeat-y,
    linear-gradient(#000 1px, transparent 1px) 100% 95px / 5px 11.132px repeat-y; }
.vruler span { flex: none; height: 111.32px; margin-left: 3px; border-top: 1px solid #000; padding-top: 2px; }
.vruler b { display: block; width: 20px; font-weight: 400; font-size: 18.500px; line-height: 20px; color: #000; writing-mode: vertical-rl; transform: rotate(180deg); text-align: right; height: 36px; }
.canvas { flex: 1; min-width: 0; background: #d6d6d6; padding: 95px 0 0 270px; }
.page { position: relative; width: 1654px; height: 1169px; background: #fff; box-shadow: 12px 12px 0 #999; }
.map { position: absolute; left: 408px; top: 138px; width: 800px; height: 880px; }
.c1 rect { fill: #cdc6f6; } .c2 rect { fill: #bd96da; } .c3 rect { fill: #ce71b3; } .c4 rect { fill: #fd5e80; }
.map path { fill: none; vector-effect: non-scaling-stroke; }
.barrio path { stroke: #333; stroke-width: 1.500; stroke-dasharray: 1.800 2.200; }
.distrito path { stroke: #444; stroke-width: 1.600; stroke-dasharray: 3 1; }
.distrito .heavy { stroke-width: 2.500; stroke-dasharray: 2 1; }

.legend { position: absolute; left: 1387px; top: 708px; }
.lg-title { font-size: 23px; line-height: 26px; }
.lg-count { font-size: 20px; line-height: 24px; margin-top: 19px; margin-bottom: 9px; }
.lg-row { display: flex; align-items: center; height: 33.700px; font-size: 19.300px; white-space: nowrap; }
.lg-row span { margin-left: 16px; }
.lg-b span { margin-left: 12px; }
.sw { flex: none; width: 27px; height: 22px; margin-left: 1px; }
.s1 { background: #cdc6f6; } .s2 { background: #bd96da; } .s3 { background: #ce71b3; } .s4 { background: #fd5e80; }
.s5 { border-top: 2px solid #bbb; border-left: 2px solid #bbb; }
.s6 { border: 2px dotted #888; }

.scale { position: absolute; left: 1218px; top: 1066px; width: 360px; }
.sc-labels { display: flex; font-size: 23px; line-height: 26px; height: 26px; position: relative; }
.sc-labels span { flex: none; width: 111px; }
.sc-labels span:nth-child(2) { width: 105px; }
.sc-bar { margin: 11px 0 0 5px; width: 335px; height: 13px; display: flex; justify-content: space-between; background: linear-gradient(#666, #666) 0 50% / 100% 3px no-repeat; }
.sc-bar i { width: 2px; background: #444; }

.vsplit { width: 10px; flex: none; background: #f0f0f0; border-left: 3px solid #c4c4c4; padding-top: 463px; }
.vsplit i { display: block; width: 3px; height: 460px; margin-left: 2px; background: linear-gradient(#d8d8d8 50%, transparent 50%) 0 0 / 3px 7px; }

/* panel */
.panel { flex: 1; min-width: 0; display: flex; flex-direction: column; }
.tabs { height: 33px; flex: none; display: flex; align-items: flex-end; border-bottom: 2px solid #bdbdbd; }
.tabs2 { height: 34px; }
.tab { height: 30px; margin-bottom: -2px; display: flex; align-items: center; justify-content: center; background: linear-gradient(#f4f4f4, #dedede); border: 2px solid #c4c4c4; border-bottom: 2px solid #bdbdbd; border-radius: 4px 4px 0 0; font-size: 19.500px; }
.tab.on { height: 34px; background: #f0f0f0; border-bottom-color: #f0f0f0; }
.tab-a { width: 94px; } .tab-b { width: 199px; } .tab-c { width: 153px; } .tab-d { width: 183px; } .tab-e { width: 186px; }
.dock { height: 36px; flex: none; display: flex; align-items: center; gap: 12px; padding: 0 3px 0 2px; position: relative; }
.dock2 { height: 37px; }
.dock i { flex: 1; height: 8px; background: linear-gradient(to right, #d6d6d6 50%, transparent 50%) 0 0 / 5px 3px repeat; margin-top: -4px; }
.dock span { font-size: 19px; }
.close { flex: none; width: 21px; height: 22px; margin-left: -9px; border: 1px solid #888; border-radius: 3px; display: flex; align-items: center; justify-content: center; background: #f4f4f4; }
.close svg { width: 13px; height: 15px; }
.tree { height: 269px; flex: none; background: #fff; border: 2px solid #c0c0c0; border-radius: 3px; }
.thead { height: 46px; display: flex; background: linear-gradient(#f2f2f2, #dcdcdc); border-top: 2px solid #aaa; border-bottom: 2px solid #999; margin: 0 1px; }
.th { display: flex; align-items: center; border-right: 2px solid #aaa; height: 100%; }
.th1 { width: 46px; justify-content: center; } .th2 { width: 46px; justify-content: center; }
.th3 { flex: 1; padding-left: 8px; padding-bottom: 3px; }
.eye { width: 30px; height: 24px; } .lk { width: 26px; height: 32px; }
.trow { height: 24.500px; display: flex; align-items: center; padding-left: 5px; line-height: 24px; position: relative; top: 1px; }
.ck { flex: none; width: 25px; height: 24px; border: 1px solid #d4d4d4; background: #f7f7f7; display: flex; align-items: center; justify-content: center; }
.ck svg { width: 20px; height: 21px; }
.ck2 { margin-left: 22px; margin-right: 20px; }
.hsplit { height: 11px; flex: none; padding-top: 3px; }
.hsplit i { display: block; width: 213px; height: 5px; margin-left: 214px; background: linear-gradient(to right, #d0d0d0 50%, transparent 50%) 0 0 / 7px 5px; }

.scrollarea { flex: 1; min-height: 0; display: flex; border: 2px solid #c4c4c4; border-radius: 3px 3px 0 0; padding-right: 1px; font-size: 19.500px; }
.scontent { flex: 1; min-width: 0; padding: 29px 17px 0 18px; }
.group { position: relative; width: 583px; border: 2px solid #c8c8c8; border-radius: 4px; padding-left: 18px; margin-bottom: 24px; }
.g1 { padding-top: 34px; padding-bottom: 20px; }
.g2 { padding-top: 30px; padding-bottom: 17px; }
.g3 { padding-top: 33px; padding-bottom: 17px; margin-bottom: 25px; }
.g4 { padding-top: 30px; padding-bottom: 18px; margin-bottom: 0; }
.gt { position: absolute; left: -4px; top: -14px; margin: 0; padding: 0 12px 0 7px; height: 26px; display: flex; align-items: center; gap: 12px; background: #f0f0f0; font-size: 21px; font-weight: 700; color: #454545; white-space: nowrap; }
.tri { flex: none; width: 0; height: 0; border-left: 9px solid transparent; border-right: 9px solid transparent; border-top: 11px solid #3c3c3c; }
.row { display: flex; align-items: center; }
.row + .row { margin-top: 10px; }
.row.mt13 { margin-top: 13px; } .row.mt18 { margin-top: 18px; } .row.mt16 { margin-top: 16px; }
.h24 { height: 24px; } .h23 { height: 23px; }
.lb { flex: none; width: 106px; white-space: nowrap; }
.w164 { width: 164px; } .w139 { width: 139px; } .w150 { width: 150px; } .w278 { width: 278px; } .pl11 { padding-left: 11px; }
.pl129 { padding-left: 129px; }
.dd { flex: none; width: 34px; height: 24px; margin-left: 16px; }
.fld { display: flex; flex: none; border: 2px solid #c6c6c6; border-radius: 4px; background: #fff; align-items: stretch; line-height: 1; }
.fld .t { flex: 1; padding-left: 6px; display: flex; align-items: center; white-space: nowrap; }
.fld.combo { background: linear-gradient(#f7f7f7, #dedede); }
.fld.dis { background: #f0f0f0; border-color: #8e8e8e; color: #8a8a8a; }
.fld.dis.combo { background: linear-gradient(#e4e4e4, #f0f0f0 40%); }
.f382 { width: 382px; } .f437 { width: 437px; } .f123 { width: 123px; } .f127 { width: 127px; } .f210 { width: 210px; } .f265 { width: 265px; }
.h33 { height: 33px; } .h34 { height: 34px; } .h39 { height: 39px; } .h32 { height: 32px; }
.arr { width: 24px; flex: none; border-left: 1px solid #bbb; display: flex; align-items: center; justify-content: center; background: linear-gradient(#f7f7f7, #e0e0e0); }
.spn { width: 24px; flex: none; border-left: 1px solid #ccc; display: flex; flex-direction: column; background: linear-gradient(#f4f4f4, #dedede); }
.spn i { flex: 1; display: block; width: auto; height: auto; border: 0; position: relative; }
.spn i + i { border-top: 1px solid #ccc; }
.spn i::after { content: ""; position: absolute; left: 6px; top: 50%; margin-top: -4px; border-left: 6px solid transparent; border-right: 6px solid transparent; }
.spn .up::after { border-bottom: 8px solid #000; }
.spn .dn::after { border-top: 8px solid #000; }
.dis .spn .up::after { border-bottom-color: #888; }
.dis .spn .dn::after { border-top-color: #888; }
.up { display: block; width: 0; height: 0; border-left: 6px solid transparent; border-right: 6px solid transparent; border-bottom: 8px solid #000; }
.dn { display: block; width: 0; height: 0; border-left: 6px solid transparent; border-right: 6px solid transparent; border-top: 8px solid #000; }
.dis .arr .dn { border-top-color: #888; }
.btn { display: flex; align-items: center; justify-content: center; flex: none; border: 2px solid #c6c6c6; border-radius: 4px; background: linear-gradient(#f6f6f6, #dcdcdc); }
.b287 { width: 287px; height: 43px; }
.b265 { width: 265px; height: 47px; padding-right: 6px; }
.swatch { width: 30px; height: 31px; background: #fff; margin-right: 7px; }
.box { flex: none; width: 24px; height: 100%; background: #f4f4f4; border: 1px solid #cfcfcf; margin-right: 10px; }

.sbar { flex: none; width: 24px; display: flex; flex-direction: column; padding-top: 1px; margin-bottom: 2px; }
.sb-b { flex: none; height: 23px; border: 2px solid #a8a8a8; border-radius: 3px; background: linear-gradient(#f6f6f6, #e0e0e0); display: flex; align-items: center; justify-content: center; }
.sb-thumb { flex: none; height: 572px; margin-top: 3px; background: linear-gradient(to right, #f4f4f4, #dcdcdc); border: 2px solid #bbb; border-radius: 2px; }
.sb-track { flex: 1; background: repeating-conic-gradient(#dedede 0 25%, #f4f4f4 0 50%) 0 0 / 3px 3px; }

.status { height: 44px; flex: none; display: flex; align-items: center; border-top: 3px solid #bfbfbf; font-size: 20.500px; }
.st { flex: none; white-space: nowrap; }
.st1 { width: 166px; padding-left: 2px; } .st2 { width: 164px; } .st3 { width: 164px; }
.zoomc { width: 150px; height: 35px; margin-top: 1px; background: #fff; font-size: 19px; }
.zoomc.combo { background: #fff; }

.taskbar { height: 75px; flex: none; display: flex; background: #231a10; color: #fff; }
.tk { flex: none; width: 95.2px; height: 100%; display: flex; align-items: center; justify-content: center; position: relative; padding-bottom: 5px; }
.tk svg { width: 48px; height: 48px; }
.run::after { content: ""; position: absolute; left: 7px; right: 7px; bottom: 0; height: 5px; background: #76b9ed; }
.act { background: #4b443d; }
.act::after { left: 0; right: 0; }
.tray { margin-left: auto; margin-right: 29px; display: grid; grid-template-columns: 70px 43px 47px 46px 47px 45px 64px 116px 104px; align-items: center; font-size: 20px; }
.ty { display: flex; align-items: center; justify-content: center; }
.ty svg { width: 34px; height: 34px; }
.ty-p { justify-content: flex-start; }
.ty-n { position: relative; justify-content: flex-end; padding-right: 10px; }
.ty-n svg { width: 44px; height: 44px; }
.nbadge { position: absolute; right: -2px; bottom: -18px; width: 32px; height: 32px; border-radius: 50%; background: #333; color: #fff; font-size: 21px; display: flex; align-items: center; justify-content: center; }
.clock { display: flex; flex-direction: column; align-items: center; gap: 12px; font-size: 21.500px; line-height: 24px; padding-left: 36px; white-space: nowrap; }
.date { font-size: 23px; }
```
